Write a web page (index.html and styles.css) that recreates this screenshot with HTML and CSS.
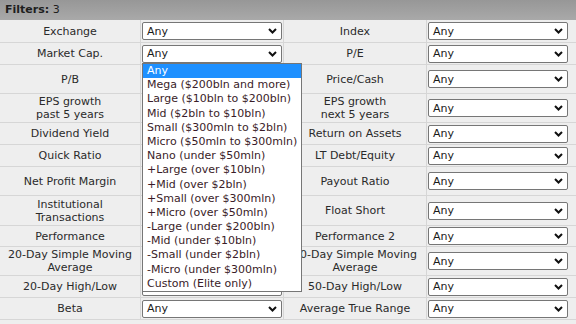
FILE: index.html
```html
<!DOCTYPE html>
<html>
<head>
<meta charset="utf-8">
<link rel="stylesheet" href="styles.css">
</head>
<body>
<div class="panel">
  <div class="header"><b>Filters:</b> 3</div>
  <div class="grid">
    <div class="lbl">Exchange</div>
    <div class="cell"><div class="sel"><span>Any</span><svg class="chev" width="9" height="6" viewBox="0 0 9 6"><path d="M1 1l3.5 3.5L8 1" fill="none" stroke="#111" stroke-width="2"/></svg></div></div>
    <div class="lbl">Index</div>
    <div class="cell"><div class="sel"><span>Any</span><svg class="chev" width="9" height="6" viewBox="0 0 9 6"><path d="M1 1l3.5 3.5L8 1" fill="none" stroke="#111" stroke-width="2"/></svg></div></div>

    <div class="lbl">Market Cap.</div>
    <div class="cell"><div class="sel"><span>Any</span><svg class="chev" width="9" height="6" viewBox="0 0 9 6"><path d="M1 1l3.5 3.5L8 1" fill="none" stroke="#111" stroke-width="2"/></svg></div></div>
    <div class="lbl">P/E</div>
    <div class="cell"><div class="sel"><span>Any</span><svg class="chev" width="9" height="6" viewBox="0 0 9 6"><path d="M1 1l3.5 3.5L8 1" fill="none" stroke="#111" stroke-width="2"/></svg></div></div>

    <div class="lbl">P/B</div>
    <div class="cell"><div class="sel"><span>Any</span><svg class="chev" width="9" height="6" viewBox="0 0 9 6"><path d="M1 1l3.5 3.5L8 1" fill="none" stroke="#111" stroke-width="2"/></svg></div></div>
    <div class="lbl">Price/Cash</div>
    <div class="cell"><div class="sel"><span>Any</span><svg class="chev" width="9" height="6" viewBox="0 0 9 6"><path d="M1 1l3.5 3.5L8 1" fill="none" stroke="#111" stroke-width="2"/></svg></div></div>

    <div class="lbl">EPS growth<br>past 5 years</div>
    <div class="cell"><div class="sel"><span>Any</span><svg class="chev" width="9" height="6" viewBox="0 0 9 6"><path d="M1 1l3.5 3.5L8 1" fill="none" stroke="#111" stroke-width="2"/></svg></div></div>
    <div class="lbl">EPS growth<br>next 5 years</div>
    <div class="cell"><div class="sel"><span>Any</span><svg class="chev" width="9" height="6" viewBox="0 0 9 6"><path d="M1 1l3.5 3.5L8 1" fill="none" stroke="#111" stroke-width="2"/></svg></div></div>

    <div class="lbl">Dividend Yield</div>
    <div class="cell"><div class="sel"><span>Any</span><svg class="chev" width="9" height="6" viewBox="0 0 9 6"><path d="M1 1l3.5 3.5L8 1" fill="none" stroke="#111" stroke-width="2"/></svg></div></div>
    <div class="lbl">Return on Assets</div>
    <div class="cell"><div class="sel"><span>Any</span><svg class="chev" width="9" height="6" viewBox="0 0 9 6"><path d="M1 1l3.5 3.5L8 1" fill="none" stroke="#111" stroke-width="2"/></svg></div></div>

    <div class="lbl">Quick Ratio</div>
    <div class="cell"><div class="sel"><span>Any</span><svg class="chev" width="9" height="6" viewBox="0 0 9 6"><path d="M1 1l3.5 3.5L8 1" fill="none" stroke="#111" stroke-width="2"/></svg></div></div>
    <div class="lbl">LT Debt/Equity</div>
    <div class="cell"><div class="sel"><span>Any</span><svg class="chev" width="9" height="6" viewBox="0 0 9 6"><path d="M1 1l3.5 3.5L8 1" fill="none" stroke="#111" stroke-width="2"/></svg></div></div>

    <div class="lbl">Net Profit Margin</div>
    <div class="cell"><div class="sel"><span>Any</span><svg class="chev" width="9" height="6" viewBox="0 0 9 6"><path d="M1 1l3.5 3.5L8 1" fill="none" stroke="#111" stroke-width="2"/></svg></div></div>
    <div class="lbl">Payout Ratio</div>
    <div class="cell"><div class="sel"><span>Any</span><svg class="chev" width="9" height="6" viewBox="0 0 9 6"><path d="M1 1l3.5 3.5L8 1" fill="none" stroke="#111" stroke-width="2"/></svg></div></div>

    <div class="lbl">Institutional<br>Transactions</div>
    <div class="cell"><div class="sel"><span>Any</span><svg class="chev" width="9" height="6" viewBox="0 0 9 6"><path d="M1 1l3.5 3.5L8 1" fill="none" stroke="#111" stroke-width="2"/></svg></div></div>
    <div class="lbl">Float Short</div>
    <div class="cell"><div class="sel"><span>Any</span><svg class="chev" width="9" height="6" viewBox="0 0 9 6"><path d="M1 1l3.5 3.5L8 1" fill="none" stroke="#111" stroke-width="2"/></svg></div></div>

    <div class="lbl">Performance</div>
    <div class="cell"><div class="sel"><span>Any</span><svg class="chev" width="9" height="6" viewBox="0 0 9 6"><path d="M1 1l3.5 3.5L8 1" fill="none" stroke="#111" stroke-width="2"/></svg></div></div>
    <div class="lbl">Performance 2</div>
    <div class="cell"><div class="sel"><span>Any</span><svg class="chev" width="9" height="6" viewBox="0 0 9 6"><path d="M1 1l3.5 3.5L8 1" fill="none" stroke="#111" stroke-width="2"/></svg></div></div>

    <div class="lbl">20-Day Simple Moving<br>Average</div>
    <div class="cell"><div class="sel"><span>Any</span><svg class="chev" width="9" height="6" viewBox="0 0 9 6"><path d="M1 1l3.5 3.5L8 1" fill="none" stroke="#111" stroke-width="2"/></svg></div></div>
    <div class="lbl">50-Day Simple Moving<br>Average</div>
    <div class="cell"><div class="sel"><span>Any</span><svg class="chev" width="9" height="6" viewBox="0 0 9 6"><path d="M1 1l3.5 3.5L8 1" fill="none" stroke="#111" stroke-width="2"/></svg></div></div>

    <div class="lbl">20-Day High/Low</div>
    <div class="cell"><div class="sel"><span>Any</span><svg class="chev" width="9" height="6" viewBox="0 0 9 6"><path d="M1 1l3.5 3.5L8 1" fill="none" stroke="#111" stroke-width="2"/></svg></div></div>
    <div class="lbl">50-Day High/Low</div>
    <div class="cell"><div class="sel"><span>Any</span><svg class="chev" width="9" height="6" viewBox="0 0 9 6"><path d="M1 1l3.5 3.5L8 1" fill="none" stroke="#111" stroke-width="2"/></svg></div></div>

    <div class="lbl">Beta</div>
    <div class="cell"><div class="sel"><span>Any</span><svg class="chev" width="9" height="6" viewBox="0 0 9 6"><path d="M1 1l3.5 3.5L8 1" fill="none" stroke="#111" stroke-width="2"/></svg></div></div>
    <div class="lbl">Average True Range</div>
    <div class="cell"><div class="sel"><span>Any</span><svg class="chev" width="9" height="6" viewBox="0 0 9 6"><path d="M1 1l3.5 3.5L8 1" fill="none" stroke="#111" stroke-width="2"/></svg></div></div>
  </div>

  <ul class="dropdown">
    <li class="active">Any</li>
    <li>Mega ($200bln and more)</li>
    <li>Large ($10bln to $200bln)</li>
    <li>Mid ($2bln to $10bln)</li>
    <li>Small ($300mln to $2bln)</li>
    <li>Micro ($50mln to $300mln)</li>
    <li>Nano (under $50mln)</li>
    <li>+Large (over $10bln)</li>
    <li>+Mid (over $2bln)</li>
    <li>+Small (over $300mln)</li>
    <li>+Micro (over $50mln)</li>
    <li>-Large (under $200bln)</li>
    <li>-Mid (under $10bln)</li>
    <li>-Small (under $2bln)</li>
    <li>-Micro (under $300mln)</li>
    <li>Custom (Elite only)</li>
  </ul>
</div>
</body>
</html>
```

FILE: styles.css
```css
* { box-sizing: border-box; }
html, body {
  margin: 0;
  padding: 0;
  background: #eeeeee;
  font-family: "DejaVu Sans", Verdana, sans-serif;
  font-size: 11px;
  color: #2a2a2a;
}
.panel {
  position: relative;
  width: 576px;
  height: 324px;
  overflow: hidden;
}
.header {
  height: 20px;
  background: linear-gradient(#979797, #a9a9a9);
  padding-left: 5px;
  line-height: 20px;
  color: #1e1e1e;
}
.header b { font-weight: bold; }
.grid {
  display: grid;
  grid-template-columns: 141px 143px 143px 149px;
  grid-template-rows: 23px 22px 29px 29px 22px 22px 29px 30px 21px 29px 22px 22px;
}
.lbl, .cell {
  border-right: 1px solid #d6d6d6;
  border-bottom: 1px solid #d6d6d6;
  display: flex;
  align-items: center;
}
.lbl {
  justify-content: center;
  text-align: center;
  line-height: 13px;
}
.cell { padding-left: 1px; }
.cell:nth-child(4n) { border-right: none; }
.sel {
  width: 140px;
  height: 18px;
  background: #fff;
  border: 1px solid #767676;
  border-radius: 2px;
  display: flex;
  align-items: center;
  padding: 0 4px 0 4px;
  color: #1a1a1a;
}
.chev { margin-left: auto; display: block; }
.dropdown {
  position: absolute;
  left: 142px;
  top: 63px;
  width: 160px;
  margin: 0;
  padding: 0;
  list-style: none;
  background: #fff;
  border: 1px solid #767676;
}
.dropdown li {
  height: 14.2px;
  line-height: 14.2px;
  padding-left: 4px;
  color: #3a1c28;
  white-space: nowrap;
}
.dropdown li.active {
  background: #1e90ff;
  color: #fff;
}
```
